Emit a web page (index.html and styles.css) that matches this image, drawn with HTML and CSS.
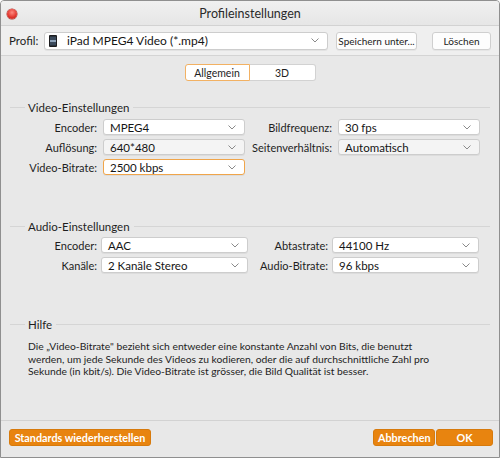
FILE: index.html
```html
<!DOCTYPE html>
<html lang="de">
<head>
    <meta charset="UTF-8">
    <title>Profileinstellungen</title>
    <link rel="stylesheet" href="styles.css">
</head>
<body>
    <div class="window">
        <div class="titlebar">
            <div class="close-btn"></div>
            <div class="title">Profileinstellungen</div>
            <div></div>
        </div>

        <div class="profile-row">
            <span class="profile-label">Profil:</span>
            <div class="select profile-select">
                <svg class="ipad-icon" width="8" height="12" viewBox="0 0 8 12">
                    <rect x="0" y="0" width="8" height="12" rx="1" fill="#1d1d1f"/>
                    <rect x="1" y="1.5" width="6" height="9" fill="#3b4a5c"/>
                    <rect x="1" y="5" width="6" height="2" fill="#8fa4bb"/>
                </svg>
                <span class="value">iPad MPEG4 Video (*.mp4)</span>
                <svg class="chevron" width="8" height="5" viewBox="0 0 8 5"><path d="M0.5 0.5 L4 4 L7.5 0.5" fill="none" stroke="#8a8a8a" stroke-width="1"/></svg>
            </div>
            <button class="btn">Speichern unter...</button>
            <button class="btn btn-delete">Löschen</button>
        </div>

        <div class="panel">
            <div class="tabs">
                <div class="tab active">Allgemein</div>
                <div class="tab">3D</div>
            </div>

            <div class="group video-group">
                <div class="group-title"><span>Video-Einstellungen</span></div>
                <div class="form-grid video-grid">
                    <label>Encoder:</label>
                    <div class="select"><span class="value">MPEG4</span><svg class="chevron" width="8" height="5" viewBox="0 0 8 5"><path d="M0.5 0.5 L4 4 L7.5 0.5" fill="none" stroke="#8a8a8a" stroke-width="1"/></svg></div>
                    <label>Bildfrequenz:</label>
                    <div class="select"><span class="value">30 fps</span><svg class="chevron" width="8" height="5" viewBox="0 0 8 5"><path d="M0.5 0.5 L4 4 L7.5 0.5" fill="none" stroke="#8a8a8a" stroke-width="1"/></svg></div>

                    <label>Auflösung:</label>
                    <div class="select dim"><span class="value">640*480</span><svg class="chevron" width="8" height="5" viewBox="0 0 8 5"><path d="M0.5 0.5 L4 4 L7.5 0.5" fill="none" stroke="#8a8a8a" stroke-width="1"/></svg></div>
                    <label>Seitenverhältnis:</label>
                    <div class="select dim"><span class="value">Automatisch</span><svg class="chevron" width="8" height="5" viewBox="0 0 8 5"><path d="M0.5 0.5 L4 4 L7.5 0.5" fill="none" stroke="#8a8a8a" stroke-width="1"/></svg></div>

                    <label>Video-Bitrate:</label>
                    <div class="select focused"><span class="value">2500 kbps</span><svg class="chevron" width="8" height="5" viewBox="0 0 8 5"><path d="M0.5 0.5 L4 4 L7.5 0.5" fill="none" stroke="#8a8a8a" stroke-width="1"/></svg></div>
                </div>
            </div>

            <div class="group audio-group">
                <div class="group-title"><span>Audio-Einstellungen</span></div>
                <div class="form-grid audio-grid">
                    <label>Encoder:</label>
                    <div class="select"><span class="value">AAC</span><svg class="chevron" width="8" height="5" viewBox="0 0 8 5"><path d="M0.5 0.5 L4 4 L7.5 0.5" fill="none" stroke="#8a8a8a" stroke-width="1"/></svg></div>
                    <label>Abtastrate:</label>
                    <div class="select"><span class="value">44100 Hz</span><svg class="chevron" width="8" height="5" viewBox="0 0 8 5"><path d="M0.5 0.5 L4 4 L7.5 0.5" fill="none" stroke="#8a8a8a" stroke-width="1"/></svg></div>

                    <label>Kanäle:</label>
                    <div class="select"><span class="value">2 Kanäle Stereo</span><svg class="chevron" width="8" height="5" viewBox="0 0 8 5"><path d="M0.5 0.5 L4 4 L7.5 0.5" fill="none" stroke="#8a8a8a" stroke-width="1"/></svg></div>
                    <label>Audio-Bitrate:</label>
                    <div class="select"><span class="value">96 kbps</span><svg class="chevron" width="8" height="5" viewBox="0 0 8 5"><path d="M0.5 0.5 L4 4 L7.5 0.5" fill="none" stroke="#8a8a8a" stroke-width="1"/></svg></div>
                </div>
            </div>

            <div class="group help-group">
                <div class="group-title"><span>Hilfe</span></div>
                <p class="help-text">Die „Video-Bitrate" bezieht sich entweder eine konstante Anzahl von Bits, die benutzt<br>werden, um jede Sekunde des Videos zu kodieren, oder die auf durchschnittliche Zahl pro<br>Sekunde (in kbit/s). Die Video-Bitrate ist grösser, die Bild Qualität ist besser.</p>
            </div>

            <div class="footer">
                <button class="btn-orange btn-reset">Standards wiederherstellen</button>
                <div class="footer-right">
                    <button class="btn-orange btn-cancel">Abbrechen</button>
                    <button class="btn-orange btn-ok">OK</button>
                </div>
            </div>
        </div>
    </div>
</body>
</html>
```

FILE: styles.css
```css
body {
    margin: 0;
    font-family: Lato, "Open Sans", sans-serif;
    font-size: 11px;
    color: #1e1e1e;
    background-color: #ffffff;
}

.window {
    width: 500px;
    height: 458px;
    box-sizing: border-box;
    border: 1px solid #8f8f8f;
    border-radius: 4px 4px 0 0;
    display: flex;
    flex-direction: column;
    background-color: #ececec;
    overflow: hidden;
}

/* title bar */
.titlebar {
    height: 24px;
    display: grid;
    grid-template-columns: 1fr auto 1fr;
    align-items: center;
    background: linear-gradient(#f0f0f0, #e6e6e6);
    border-bottom: 1px solid #d2d2d2;
}

.close-btn {
    width: 10px;
    height: 10px;
    margin-left: 6px;
    margin-top: 1px;
    border-radius: 50%;
    background: radial-gradient(circle at 50% 35%, #ff8a80, #e0332b 60%, #b8241d);
    box-shadow: 0 0 0 0.5px #a8302a;
}

.title {
    font-size: 12.5px;
    color: #2a2a2a;
    padding-top: 1px;
}

/* profile row */
.profile-row {
    height: 29px;
    display: flex;
    align-items: center;
    padding: 0 7px 0 8px;
    background-color: #efefef;
    border-bottom: 1px solid #d4d4d4;
}

.profile-label {
    font-size: 11.5px;
    width: 35px;
}

.btn {
    font-family: inherit;
    font-size: 10px;
    color: #222;
    height: 18px;
    padding: 0;
    white-space: nowrap;
    background-color: #fdfdfd;
    border: 1px solid #cfcfcf;
    border-radius: 3px;
    box-shadow: 0 1px 0 rgba(0, 0, 0, 0.04);
}

.profile-row .btn {
    width: 81px;
    margin-left: 8px;
}

.profile-row .btn-delete {
    width: 59px;
    margin-left: 15px;
}

/* select boxes */
.select {
    height: 16px;
    box-sizing: border-box;
    display: flex;
    align-items: center;
    padding: 0 8px 0 6px;
    background-color: #ffffff;
    border: 1px solid #cdcdcd;
    border-radius: 3px;
    box-shadow: 0 1px 0 rgba(0, 0, 0, 0.05);
    font-size: 11.5px;
    color: #151515;
}

.select .value {
    flex: 1;
    white-space: nowrap;
}

.select .chevron {
    flex: none;
}

.select.dim {
    background-color: #f4f4f4;
}

.select.focused {
    border-color: #f0a54a;
}

.profile-select {
    width: 284px;
    height: 18px;
    padding-left: 4px;
    font-size: 12px;
}

.ipad-icon {
    margin-right: 10px;
}

/* panel */
.panel {
    flex: 1;
    display: flex;
    flex-direction: column;
    background-color: #e8e8e8;
}

.tabs {
    display: flex;
    justify-content: center;
    margin-top: 8px;
}

.tab {
    width: 65px;
    height: 17px;
    box-sizing: border-box;
    display: flex;
    align-items: center;
    justify-content: center;
    font-size: 10.5px;
    background-color: #ffffff;
    border: 1px solid #d2d2d2;
}

.tab:first-child {
    border-radius: 3px 0 0 3px;
}

.tab:last-child {
    width: 66px;
    border-left: none;
    border-radius: 0 3px 3px 0;
}

.tab.active {
    border: 1px solid #f2b163;
}

/* groups */
.group-title {
    display: flex;
    align-items: center;
    height: 14px;
    padding: 0 9px;
    font-size: 11.5px;
}

.group-title::before {
    content: "";
    width: 15px;
    border-top: 1px solid #d5d5d5;
    margin-right: 3px;
}

.group-title::after {
    content: "";
    flex: 1;
    border-top: 1px solid #d5d5d5;
    margin-left: 4px;
}

.video-group {
    margin-top: 19px;
}

.audio-group {
    margin-top: 44px;
}

.help-group {
    margin-top: 44px;
}

.form-grid {
    display: grid;
    row-gap: 4px;
    align-items: center;
    padding-left: 9px;
    margin-top: 5px;
}

.form-grid label {
    text-align: right;
    font-size: 11px;
    white-space: nowrap;
}

.video-grid {
    grid-template-columns: 87px 142px 81px 142px;
    column-gap: 6px;
}

.audio-grid {
    grid-template-columns: 87px 147px 76px 147px;
    column-gap: 4px;
    margin-top: 4px;
}

.help-text {
    margin: 9px 0 0 27px;
    font-size: 10.3px;
    line-height: 12.5px;
    color: #1e1e1e;
}

/* footer */
.footer {
    margin-top: auto;
    display: flex;
    justify-content: space-between;
    padding: 8px 6px 11px 8px;
    border-top: 1px solid #d2d2d2;
}

.footer-right {
    display: flex;
    gap: 1px;
}

.btn-orange {
    font-family: inherit;
    font-size: 10.8px;
    font-weight: bold;
    color: #ffffff;
    height: 17px;
    padding: 0 4px;
    white-space: nowrap;
    background-color: #e8840f;
    border: 1px solid #d77a0c;
    border-radius: 3px;
}

.btn-reset {
    width: 142px;
}

.btn-cancel {
    width: 62px;
}

.btn-ok {
    width: 57px;
}
```
